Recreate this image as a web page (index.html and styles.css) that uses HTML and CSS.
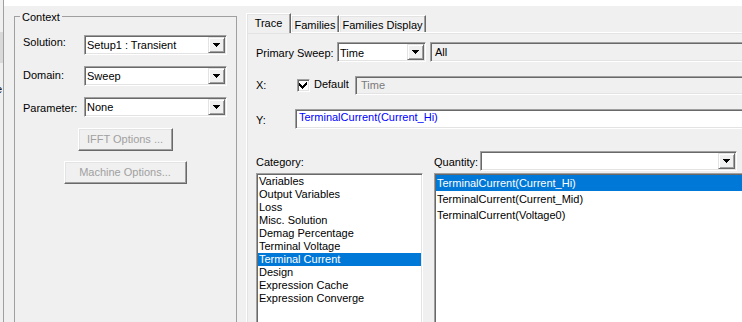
FILE: index.html
```html
<!DOCTYPE html>
<html>
<head>
<meta charset="utf-8">
<title>Report</title>
<link rel="stylesheet" href="styles.css">
</head>
<body>
<div class="screen">
  <div class="edge">
    <div class="edge-item"></div>
    <div class="edge-e">e</div>
  </div>
  <div class="main">
    <div class="topstrip"></div>
    <div class="content">
      <fieldset class="group">
        <legend>Context</legend>
        <div class="row r1">
          <span class="lbl">Solution:</span>
          <div class="combo cw">
            <span class="val">Setup1 : Transient</span>
            <span class="drop"><svg width="7" height="4" viewBox="0 0 7 4" shape-rendering="crispEdges"><path d="M0 0h7v1h-1v1h-1v1h-1v1h-1v-1h-1v-1h-1v-1h-1z"/></svg></span>
          </div>
        </div>
        <div class="row r2">
          <span class="lbl">Domain:</span>
          <div class="combo cw">
            <span class="val">Sweep</span>
            <span class="drop"><svg width="7" height="4" viewBox="0 0 7 4" shape-rendering="crispEdges"><path d="M0 0h7v1h-1v1h-1v1h-1v1h-1v-1h-1v-1h-1v-1h-1z"/></svg></span>
          </div>
        </div>
        <div class="row r3">
          <span class="lbl">Parameter:</span>
          <div class="combo cw">
            <span class="val">None</span>
            <span class="drop"><svg width="7" height="4" viewBox="0 0 7 4" shape-rendering="crispEdges"><path d="M0 0h7v1h-1v1h-1v1h-1v1h-1v-1h-1v-1h-1v-1h-1z"/></svg></span>
          </div>
        </div>
        <div class="btns">
          <div class="btn b1">IFFT Options ...</div>
          <div class="btn b2">Machine Options...</div>
        </div>
      </fieldset>

      <div class="tabctl">
        <div class="tabstrip">
          <div class="tab active t1">Trace</div>
          <div class="tab t2">Families</div>
          <div class="tab t3">Families Display</div>
        </div>
        <div class="page">
          <div class="prow p1">
            <span class="plbl w81">Primary Sweep:</span>
            <div class="combo pw">
              <span class="val">Time</span>
              <span class="drop"><svg width="7" height="4" viewBox="0 0 7 4" shape-rendering="crispEdges"><path d="M0 0h7v1h-1v1h-1v1h-1v1h-1v-1h-1v-1h-1v-1h-1z"/></svg></span>
            </div>
            <div class="field ro all">All</div>
          </div>
          <div class="prow p2">
            <span class="plbl w41">X:</span>
            <span class="chk"><svg width="13" height="13" viewBox="0 0 13 13" shape-rendering="crispEdges"><path fill="#000" d="M9 3h1v3h-1v1h-1v1h-1v1h-1v1h-1v-1h-1v-1h-1v-1h-1v-3h1v1h1v1h1v1h1v-1h1v-1h1v-1h1z"/></svg></span>
            <span class="chklbl">Default</span>
            <div class="field ro dis">Time</div>
          </div>
          <div class="prow p3">
            <span class="plbl w39">Y:</span>
            <div class="field expr">TerminalCurrent(Current_Hi)</div>
          </div>
          <div class="grid">
            <div class="qhead">
              <span class="plbl">Category:</span>
            </div>
            <div class="qhead">
              <span class="plbl w46">Quantity:</span>
              <div class="combo qw">
                <span class="val"></span>
                <span class="drop"><svg width="7" height="4" viewBox="0 0 7 4" shape-rendering="crispEdges"><path d="M0 0h7v1h-1v1h-1v1h-1v1h-1v-1h-1v-1h-1v-1h-1z"/></svg></span>
              </div>
            </div>
            <div class="list cat">
              <div class="item">Variables</div>
              <div class="item">Output Variables</div>
              <div class="item">Loss</div>
              <div class="item">Misc. Solution</div>
              <div class="item">Demag Percentage</div>
              <div class="item">Terminal Voltage</div>
              <div class="item sel">Terminal Current</div>
              <div class="item">Design</div>
              <div class="item">Expression Cache</div>
              <div class="item">Expression Converge</div>
            </div>
            <div class="list qty">
              <div class="item sel">TerminalCurrent(Current_Hi)</div>
              <div class="item">TerminalCurrent(Current_Mid)</div>
              <div class="item">TerminalCurrent(Voltage0)</div>
            </div>
          </div>
        </div>
      </div>
    </div>
  </div>
</div>
</body>
</html>
```

FILE: styles.css
```css
html, body {
  margin: 0;
  padding: 0;
}
body {
  background: #f0f0f0;
  font: 11px/13px "Liberation Sans", Arial, sans-serif;
  color: #000;
}
.screen {
  display: flex;
  width: 742px;
  height: 322px;
  overflow: hidden;
}
.edge {
  width: 3px;
  flex: none;
  overflow: hidden;
  display: flex;
  flex-direction: column;
}
.edge-item {
  flex: none;
  margin-top: 32px;
  height: 31px;
  background: #d9d9d9;
}
.edge-e {
  margin-top: 20px;
  margin-left: -4px;
  line-height: 13px;
}
.main {
  flex: 1;
  min-width: 0;
  border-left: 1px solid #a0a0a0;
  display: flex;
  flex-direction: column;
}
.topstrip {
  flex: none;
  height: 6px;
  background: #fff;
}
.content {
  display: flex;
  align-items: flex-start;
  padding-left: 10px;
}

/* group box */
.group {
  flex: none;
  width: 223px;
  height: 400px;
  box-sizing: border-box;
  margin: 3px 0 0;
  padding: 11px 9px 0 8px;
  border: 1px solid #a0a0a0;
  min-width: 0;
}
.group legend {
  padding: 2px 2px 0;
  margin-left: -3px;
  line-height: 13px;
}
.row {
  display: flex;
  align-items: flex-start;
  height: 20px;
}
.row + .row {
  margin-top: 11px;
}
.lbl {
  width: 61px;
  flex: none;
  white-space: nowrap;
}
.r1 .lbl { margin-top: 1px; }
.r2 .lbl { margin-top: 3px; }
.r3 .lbl { margin-top: 5px; }

/* 3D controls */
.combo {
  display: flex;
  flex: none;
  height: 20px;
  box-sizing: border-box;
  border: 1px solid;
  border-color: #a0a0a0 #fff #fff #a0a0a0;
  box-shadow: inset 1px 1px 0 #696969, inset -1px -1px 0 #e3e3e3;
  background: #fff;
  padding: 1px;
}
.cw { width: 143px; }
.pw { width: 89px; }
.qw { width: 257px; }
.val {
  flex: 1;
  min-width: 0;
  padding: 2px 0 0 1px;
  white-space: nowrap;
  overflow: hidden;
}
.pw .val { padding-top: 3px; }
.drop {
  flex: none;
  width: 17px;
  box-sizing: border-box;
  border: 1px solid;
  border-color: #e3e3e3 #696969 #696969 #e3e3e3;
  box-shadow: inset 1px 1px 0 #fff, inset -1px -1px 0 #a0a0a0;
  background: #f0f0f0;
  display: flex;
  align-items: center;
  justify-content: center;
}
.drop svg { display: block; }

.btns {
  display: flex;
  flex-direction: column;
  align-items: center;
  margin-top: 11px;
}
.btn {
  height: 23px;
  box-sizing: border-box;
  border: 1px solid;
  border-color: #fff #696969 #696969 #fff;
  box-shadow: inset -1px -1px 0 #a0a0a0, inset 1px 1px 0 #e3e3e3;
  color: #a0a0a0;
  display: flex;
  align-items: center;
  justify-content: center;
  white-space: nowrap;
}
.b1 { width: 95px; }
.b2 { width: 123px; margin-top: 10px; }

/* tab control */
.tabctl {
  flex: none;
  width: 520px;
  margin: 7px 0 0 9px;
  display: flex;
  flex-direction: column;
}
.tabstrip {
  display: flex;
  align-items: flex-end;
  height: 19px;
}
.tab {
  height: 17px;
  box-sizing: border-box;
  border: 1px solid;
  border-bottom: none;
  border-color: #fff #696969 transparent #fff;
  box-shadow: inset -1px 0 0 #a0a0a0, inset 1px 1px 0 #e3e3e3;
  text-align: center;
  padding-top: 3px;
  white-space: nowrap;
  background: #f0f0f0;
}
.tab.active {
  height: 20px;
  margin-bottom: -1px;
  position: relative;
  z-index: 1;
}
.t1 { width: 45px; }
.t2 { width: 48px; }
.t3 { width: 87px; }
.page {
  height: 400px;
  border: 1px solid;
  border-color: #fff #696969 #696969 #fff;
  box-shadow: inset 1px 1px 0 #e3e3e3;
  padding: 9px 0 0 9px;
}
.prow {
  display: flex;
  align-items: flex-start;
}
.p1 { height: 20px; }
.p2 { height: 19px; margin-top: 14px; }
.p3 { height: 20px; margin-top: 14px; }
.plbl {
  flex: none;
  white-space: nowrap;
  margin-top: 5px;
}
.p2 .plbl { margin-top: 3px; }
.w81 { width: 81px; }
.w41 { width: 41px; }
.w39 { width: 39px; }
.w46 { width: 46px; }
.field {
  flex: 1;
  min-width: 0;
  box-sizing: border-box;
  border: 1px solid;
  border-color: #a0a0a0 #fff #fff #a0a0a0;
  box-shadow: inset 1px 1px 0 #696969, inset -1px -1px 0 #e3e3e3;
  background: #fff;
  white-space: nowrap;
  overflow: hidden;
}
.all {
  height: 20px;
  margin-left: 4px;
  padding: 3px 0 0 4px;
}
.ro { background: #f0f0f0; }
.dis {
  height: 19px;
  color: #7a7a7a;
  padding: 2px 0 0 5px;
}
.expr {
  height: 20px;
  color: #0000ff;
  padding: 1px 0 0 3px;
}
.chk {
  flex: none;
  width: 13px;
  height: 13px;
  margin-top: 3px;
  box-sizing: border-box;
  border: 1px solid;
  border-color: #a0a0a0 #fff #fff #a0a0a0;
  box-shadow: inset 1px 1px 0 #696969, inset -1px -1px 0 #e3e3e3;
  background: #fff;
}
.chk svg {
  display: block;
  margin: -1px;
}
.chklbl {
  flex: none;
  width: 45px;
  box-sizing: border-box;
  padding-left: 4px;
  margin-top: 2px;
}

.grid {
  display: grid;
  grid-template-columns: 167px 1fr;
  column-gap: 11px;
  row-gap: 2px;
  margin-top: 22px;
}
.qhead {
  display: flex;
  align-items: flex-start;
  height: 20px;
}
.list {
  height: 200px;
  box-sizing: border-box;
  border: 1px solid;
  border-color: #a0a0a0 #fff #fff #a0a0a0;
  box-shadow: inset 1px 1px 0 #696969, inset -1px -1px 0 #e3e3e3;
  background: #fff;
  padding: 1px;
}
.item {
  white-space: nowrap;
  padding-left: 1px;
}
.cat .item {
  height: 13px;
  line-height: 13px;
}
.qty .item {
  height: 16px;
  line-height: 16px;
}
.item.sel {
  background: #0078d7;
  color: #fff;
}
```
